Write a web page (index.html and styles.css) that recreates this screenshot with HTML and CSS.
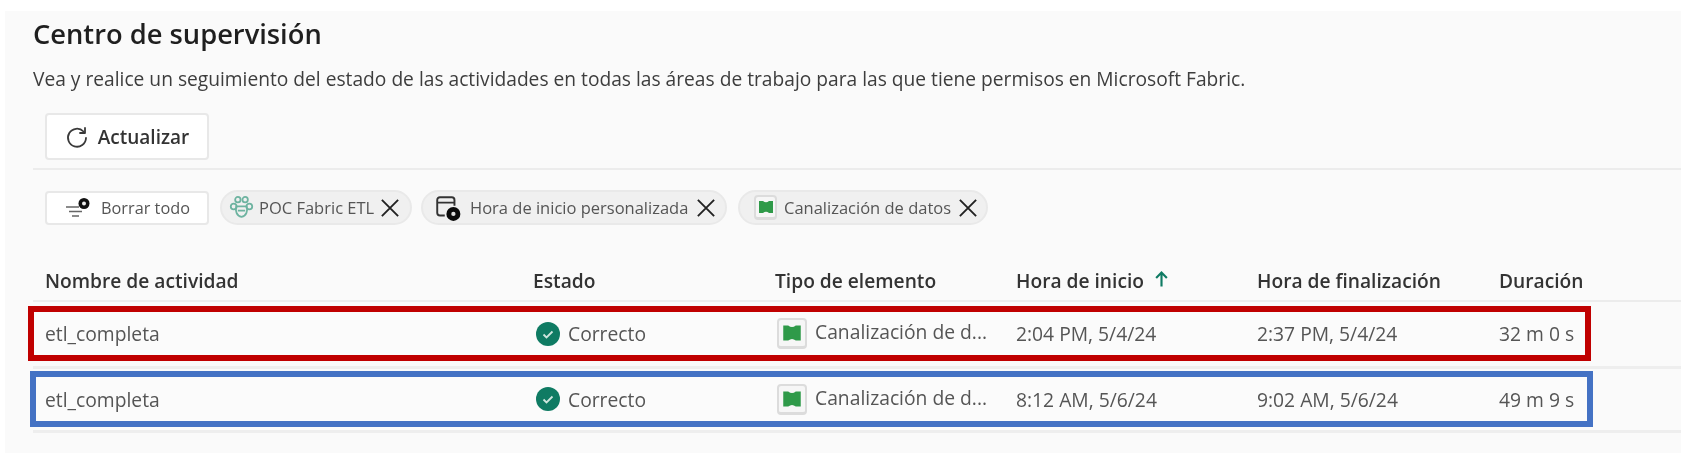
FILE: index.html
```html
<!DOCTYPE html>
<html lang="es">
<head>
<meta charset="utf-8">
<title>Centro de supervisión</title>
<link rel="stylesheet" href="styles.css">
</head>
<body>
<main class="panel">
  <div class="soft">
    <h1 class="title">Centro de supervisión</h1>
    <p class="desc">Vea y realice un seguimiento del estado de las actividades en todas las áreas de trabajo para las que tiene permisos en Microsoft Fabric.</p>
    <div class="toolbar">
      <button class="btn-refresh">
        <svg class="ic-refresh" viewBox="0 0 24 24" fill="none" stroke="#3a3a3a" stroke-width="1.800" stroke-linecap="round"><path d="M18.500 6.500A9 9 0 1 0 21 13"/><path d="M20 3v5h-5" stroke-linejoin="round"/></svg>
        <span>Actualizar</span>
      </button>
    </div>
    <div class="filters">
      <button class="btn-clear">
        <svg class="ic-clear" viewBox="0 0 28 24" fill="none"><path d="M2 11h13M5 15.500h13M8 20h7" stroke="#666" stroke-width="1.700"/><circle cx="20" cy="7.500" r="5.500" fill="#111"/><circle cx="20" cy="7.500" r="2" fill="#eee"/></svg>
        <span>Borrar todo</span>
      </button>
      <div class="chip chip-a">
        <svg class="ic-ws" viewBox="0 0 24 24" fill="none" stroke="#6db3a0" stroke-width="1.700"><circle cx="8.500" cy="4.500" r="2.600"/><circle cx="15.500" cy="4.500" r="2.600"/><circle cx="4.500" cy="11" r="2.800"/><circle cx="19.500" cy="11" r="2.800"/><path d="M7 11h10c1 4 0 9-5 10-5-1-6-6-5-10Z"/><path d="M8.500 15h7"/></svg>
        <span>POC Fabric ETL</span>
        <svg class="ic-x" viewBox="0 0 16 16"><path d="M1.500 1.500l13 13M14.500 1.500l-13 13" stroke="#222" stroke-width="1.500" fill="none"/></svg>
      </div>
      <div class="chip chip-b">
        <svg class="ic-cal" viewBox="0 0 26 26" fill="none"><path d="M10 20H5.500A2.500 2.500 0 0 1 3 17.500v-12A2.500 2.500 0 0 1 5.500 3h11A2.500 2.500 0 0 1 19 5.500V11M3 8h16" stroke="#333" stroke-width="1.800"/><circle cx="18" cy="18.500" r="6.500" fill="#0b0b0b"/><circle cx="18" cy="18.500" r="2" fill="#ddd"/></svg>
        <span>Hora de inicio personalizada</span>
        <svg class="ic-x" viewBox="0 0 16 16"><path d="M1.500 1.500l13 13M14.500 1.500l-13 13" stroke="#222" stroke-width="1.500" fill="none"/></svg>
      </div>
      <div class="chip chip-c">
        <span class="tile tile-sm"><svg viewBox="0 0 16 16"><path d="M1 2h4q3 2.500 6 0h4v12h-4q-3-2.500-6 0H1Z" fill="#2f9a49"/></svg></span>
        <span>Canalización de datos</span>
        <svg class="ic-x" viewBox="0 0 16 16"><path d="M1.500 1.500l13 13M14.500 1.500l-13 13" stroke="#222" stroke-width="1.500" fill="none"/></svg>
      </div>
    </div>
    <div class="head cols">
      <div>Nombre de actividad</div>
      <div>Estado</div>
      <div>Tipo de elemento</div>
      <div class="sorted"><span>Hora de inicio</span><svg class="ic-up" viewBox="0 0 14 16" fill="none" stroke="#0f7b63" stroke-width="2"><path d="M7 15V2M2 7l5-5 5 5"/></svg></div>
      <div>Hora de finalización</div>
      <div>Duración</div>
    </div>
  </div>
  <div class="row row-red cols">
    <div class="soft">etl_completa</div>
    <div class="soft status"><svg class="ic-ok" viewBox="0 0 24 24"><circle cx="12" cy="12" r="12" fill="#0f7b63"/><path d="M7.500 12.500l3 3L16.500 9.500" fill="none" stroke="#cfe6de" stroke-width="1.800"/></svg>Correcto</div>
    <div class="soft type"><span class="tile"><svg viewBox="0 0 16 16"><path d="M1 2h4q3 2.500 6 0h4v12h-4q-3-2.500-6 0H1Z" fill="#2f9a49"/></svg></span><span class="type-text">Canalización de d...</span></div>
    <div class="soft">2:04 PM, 5/4/24</div>
    <div class="soft">2:37 PM, 5/4/24</div>
    <div class="soft">32 m 0 s</div>
  </div>
  <div class="rule rule-mid"></div>
  <div class="row row-blue cols">
    <div class="soft">etl_completa</div>
    <div class="soft status"><svg class="ic-ok" viewBox="0 0 24 24"><circle cx="12" cy="12" r="12" fill="#0f7b63"/><path d="M7.500 12.500l3 3L16.500 9.500" fill="none" stroke="#cfe6de" stroke-width="1.800"/></svg>Correcto</div>
    <div class="soft type"><span class="tile"><svg viewBox="0 0 16 16"><path d="M1 2h4q3 2.500 6 0h4v12h-4q-3-2.500-6 0H1Z" fill="#2f9a49"/></svg></span><span class="type-text">Canalización de d...</span></div>
    <div class="soft">8:12 AM, 5/6/24</div>
    <div class="soft">9:02 AM, 5/6/24</div>
    <div class="soft">49 m 9 s</div>
  </div>
  <div class="rule rule-end"></div>
</main>
</body>
</html>
```
FILE: styles.css
```css
* { box-sizing: border-box; }
html, body { margin: 0; background: #fff; }
body {
  height: 461px;
  padding: 11px 0 0 5px;
  overflow: hidden;
  font-family: "Open Sans", "Noto Sans", sans-serif;
  color: #333;
}
.panel {
  height: 442px;
  background: #fafafa;
}
.soft { filter: blur(0.7px); }
.title {
  margin: 0;
  padding: 5px 0 0 28px;
  height: 40px;
  font-size: 27.300px;
  line-height: 36px;
  font-weight: 600;
  color: #1f1f1f;
}
.desc {
  margin: 0;
  padding: 17px 0 0 28px;
  height: 62px;
  font-size: 19.200px;
  line-height: 22px;
  color: #3d3d3d;
  white-space: nowrap;
}
.toolbar {
  margin-left: 28px;
  height: 57px;
  border-bottom: 2px solid #ececec;
  padding: 0 0 0 12px;
}
.btn-refresh {
  width: 164px;
  height: 47px;
  background: #fff;
  border: 2px solid #e8e8e8;
  border-radius: 4px;
  display: flex;
  align-items: center;
  justify-content: center;
  gap: 9px;
  font: 600 19px "Open Sans", sans-serif;
  color: #333;
  padding: 0;
}
.ic-refresh { width: 24px; height: 24px; }
.filters {
  display: flex;
  align-items: center;
  gap: 9px;
  margin: 20px 0 0 40px;
  height: 35px;
}
.btn-clear {
  width: 164px;
  height: 34px;
  background: #fff;
  border: 2px solid #e8e8e8;
  border-radius: 4px;
  display: flex;
  align-items: center;
  justify-content: center;
  gap: 9px;
  font: 400 16.300px "Open Sans", sans-serif;
  color: #555;
  margin-right: 2px;
  padding: 0;
}
.ic-clear { width: 28px; height: 24px; }
.chip {
  height: 35px;
  background: #f0f0f0;
  border: 2px solid #e9e9e9;
  border-radius: 18px;
  display: flex;
  align-items: center;
  font-size: 16.500px;
  color: #555;
  padding: 0 10px 0 7px;
  white-space: nowrap;
}
.chip-a { width: 192px; gap: 5px; }
.chip-b { width: 306px; gap: 8px; padding-left: 11px; }
.chip-c { width: 250px; gap: 7px; margin-left: 2px; padding-left: 14px; }
.ic-ws { width: 25px; height: 27px; flex: none; }
.ic-cal { width: 28px; height: 28px; flex: none; }
.ic-x { width: 20px; height: 20px; flex: none; margin-left: auto; }
.sorted { display: flex; align-items: center; gap: 10px; }
.ic-up { width: 15px; height: 18px; margin-top: -3px; }
.tile {
  width: 30px;
  height: 31px;
  background: #f6f6f6;
  border: 2px solid #dcdcdc;
  border-bottom-width: 3px;
  border-radius: 4px;
  display: flex;
  align-items: center;
  justify-content: center;
  flex: none;
}
.tile svg { width: 20px; height: 20px; }
.tile-sm { width: 23px; height: 25px; }
.tile-sm svg { width: 16px; height: 16px; }
.cols {
  display: grid;
  grid-template-columns: 488px 242px 241px 241px 242px 1fr;
  align-items: center;
}
.head {
  margin: 28px 0 0 28px;
  padding: 8px 0 0 12px;
  height: 49px;
  border-bottom: 2px solid #ececec;
  font-size: 19.200px;
  font-weight: 600;
  color: #333;
}
.row {
  width: 1563px;
  border: 6px solid;
  font-size: 19.300px;
  color: #555;
  background: #fbfbfb;
  white-space: nowrap;
}
.row-red {
  height: 55px;
  border-color: #c00000;
  margin: 4px 0 0 23px;
  padding-left: 11px;
}
.row-blue {
  height: 56px;
  border-color: #4472c4;
  margin: 2px 0 0 25px;
  padding-left: 9px;
}
.rule {
  height: 3px;
  margin-left: 28px;
  background: #eeeeee;
}
.rule-mid { margin-top: 5px; }
.rule-end { margin-top: 3px; }
.status { display: flex; align-items: center; gap: 8px; padding-left: 3px; }
.ic-ok { width: 24px; height: 24px; flex: none; }
.type { display: flex; align-items: center; gap: 8px; padding-left: 2px; }
.type-text { margin-top: -4px; }
```
